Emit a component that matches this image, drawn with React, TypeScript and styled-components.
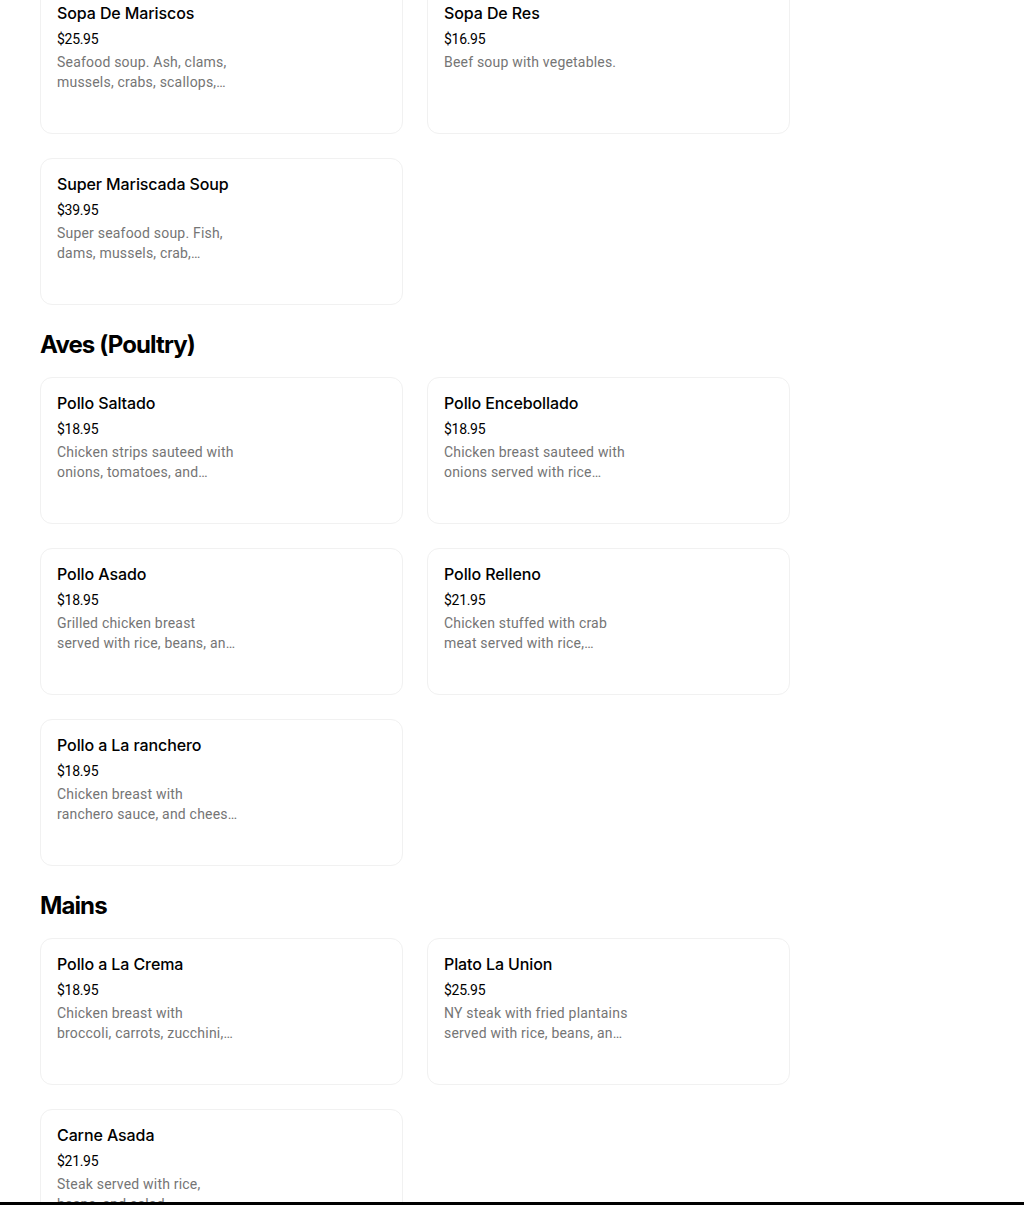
import React from "react";
import styled, { createGlobalStyle } from "styled-components";

type Item = { name: string; price: string; description: string };
type Section = { title?: string; items: Item[] };

const sections: Section[] = [
  {
    items: [
      {
        name: "Sopa De Mariscos",
        price: "$25.95",
        description:
          "Seafood soup. Ash, clams, mussels, crabs, scallops, shrimp and calamari.",
      },
      {
        name: "Sopa De Res",
        price: "$16.95",
        description: "Beef soup with vegetables.",
      },
      {
        name: "Super Mariscada Soup",
        price: "$39.95",
        description:
          "Super seafood soup. Fish, dams, mussels, crab, scallops, shrimp and lobster tail.",
      },
    ],
  },
  {
    title: "Aves (Poultry)",
    items: [
      {
        name: "Pollo Saltado",
        price: "$18.95",
        description:
          "Chicken strips sauteed with onions, tomatoes, and french fries served with rice.",
      },
      {
        name: "Pollo Encebollado",
        price: "$18.95",
        description:
          "Chicken breast sauteed with onions served with rice accompanied by beans and salad.",
      },
      {
        name: "Pollo Asado",
        price: "$18.95",
        description: "Grilled chicken breast served with rice, beans, and salad.",
      },
      {
        name: "Pollo Relleno",
        price: "$21.95",
        description:
          "Chicken stuffed with crab meat served with rice, beans, and salad.",
      },
      {
        name: "Pollo a La ranchero",
        price: "$18.95",
        description:
          "Chicken breast with ranchero sauce, and cheese served with rice and beans.",
      },
    ],
  },
  {
    title: "Mains",
    items: [
      {
        name: "Pollo a La Crema",
        price: "$18.95",
        description:
          "Chicken breast with broccoli, carrots, zucchini, and cream sauce.",
      },
      {
        name: "Plato La Union",
        price: "$25.95",
        description:
          "NY steak with fried plantains served with rice, beans, and salad.",
      },
      {
        name: "Carne Asada",
        price: "$21.95",
        description: "Steak served with rice, beans, and salad.",
      },
    ],
  },
];

const App = () => {
  return (
    <>
      <GlobalStyle />
      <Page>
        {sections.map((section, i) => (
          <MenuSection key={i}>
            {section.title && <SectionTitle>{section.title}</SectionTitle>}
            <Grid>
              {section.items.map((item) => (
                <Card key={item.name}>
                  <ItemName>{item.name}</ItemName>
                  <Price>{item.price}</Price>
                  <Description>{item.description}</Description>
                </Card>
              ))}
            </Grid>
          </MenuSection>
        ))}
      </Page>
      <BottomBar />
    </>
  );
};

export default App;

const GlobalStyle = createGlobalStyle`
  body {
    margin: 0;
    background: #ffffff;
    font-family: Inter, "Noto Sans", Arial, sans-serif;
    color: #000000;
    overflow: hidden;
  }
`;

const Page = styled.div`
  padding: 0 40px;
  margin-top: -13px;
`;

const MenuSection = styled.section`
  & + & {
    margin-top: 24px;
  }
`;

const SectionTitle = styled.h2`
  margin: 0 0 16px;
  font-size: 24px;
  line-height: 32px;
  font-weight: 700;
  letter-spacing: -0.9px;
`;

const Grid = styled.div`
  display: grid;
  grid-template-columns: 363px 363px;
  gap: 24px;
`;

const Card = styled.div`
  box-sizing: border-box;
  height: 147px;
  padding: 16px;
  border: 1px solid #f1f1f1;
  border-radius: 12px;
  background: #ffffff;
`;

const ItemName = styled.div`
  font-size: 16px;
  line-height: 18px;
  font-weight: 500;
  letter-spacing: -0.1px;
`;

const Price = styled.div`
  margin-top: 7px;
  font-family: Roboto, Arial, sans-serif;
  font-size: 14px;
  line-height: 20px;
  letter-spacing: -0.3px;
`;

const Description = styled.div`
  margin-top: 3px;
  max-width: 184px;
  font-family: Roboto, Arial, sans-serif;
  font-size: 14px;
  line-height: 20px;
  letter-spacing: 0.2px;
  color: #757575;
  display: -webkit-box;
  -webkit-line-clamp: 2;
  -webkit-box-orient: vertical;
  overflow: hidden;
`;

const BottomBar = styled.div`
  position: fixed;
  left: 0;
  right: 0;
  bottom: 0;
  height: 3px;
  background: #000000;
`;
